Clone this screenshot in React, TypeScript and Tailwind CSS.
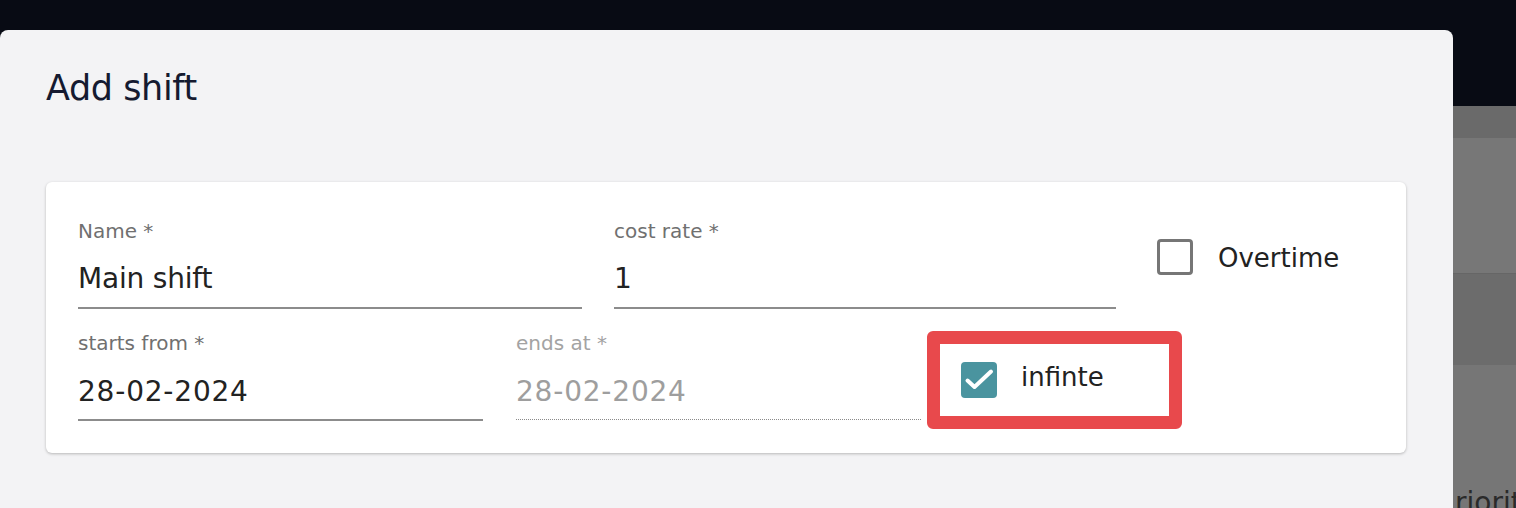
const font = { fontFamily: '"DejaVu Sans", "Noto Sans", sans-serif' }

function Field({
  label,
  value,
  width,
  disabled = false,
  date = false,
}: {
  label: string
  value: string
  width: string
  disabled?: boolean
  date?: boolean
}) {
  return (
    <div className={`${width} flex flex-col`}>
      <span className={`text-[20px] leading-[24px] ${disabled ? 'text-[#a3a3a3]' : 'text-[#707070]'}`}>{label}</span>
      <div
        className={`${date ? 'mt-[20px] pb-[10px]' : 'mt-[19px] pb-[11px]'} ${
          disabled ? 'border-b border-dotted border-[#8a8a8a] text-[#9e9e9e]' : 'border-b-2 border-[#8c8c8c] text-[#222]'
        }`}
      >
        <span className={`block text-[28px] leading-[34px] ${date ? 'tracking-[0.8px]' : 'tracking-[-0.2px]'}`}>
          {value}
        </span>
      </div>
    </div>
  )
}

function Checkbox({ checked }: { checked: boolean }) {
  if (!checked) {
    return <span className="h-[36px] w-[36px] shrink-0 rounded-[4px] border-[3px] border-[#767676]" />
  }
  return (
    <span className="h-[36px] w-[36px] shrink-0 rounded-[4px] bg-[#4a949f]">
      <svg viewBox="0 0 36 36" className="h-[36px] w-[36px]">
        <polyline
          points="6.5,18.5 13.5,25 30,9.5"
          fill="none"
          stroke="white"
          strokeWidth="4"
          strokeLinecap="round"
          strokeLinejoin="round"
        />
      </svg>
    </span>
  )
}

export default function App() {
  return (
    <div className="flex h-[508px] w-full overflow-hidden bg-[#080b14]" style={font}>
      <div className="mt-[30px] w-[1453px] shrink-0 rounded-t-lg bg-[#f3f3f5] pl-[46px] pt-[38px]">
        <h2 className="text-[35px] leading-[40px] tracking-[-0.4px] text-[#151a30]">Add shift</h2>

        <div className="mt-[74px] w-[1360px] rounded-md bg-white pl-[32px] pt-[37px] pb-[24px] shadow-[0_1px_3px_rgba(0,0,0,0.25)]">
          <div className="flex items-start">
            <Field label="Name *" value="Main shift" width="w-[504px]" />
            <div className="ml-[32px]">
              <Field label="cost rate *" value="1" width="w-[502px]" />
            </div>
            <label className="ml-[41px] mt-[19px] flex items-center">
              <Checkbox checked={false} />
              <span className="ml-[25px] mt-[3px] text-[26px] leading-[34px] text-[#222]">Overtime</span>
            </label>
          </div>

          <div className="mt-[22px] flex items-start">
            <Field label="starts from *" value="28-02-2024" width="w-[405px]" date />
            <div className="ml-[33px]">
              <Field label="ends at *" value="28-02-2024" width="w-[405px]" disabled date />
            </div>
            <div className="ml-[6px] flex h-[98px] w-[255px] items-center rounded-[6px] border-[13px] border-[#e8494c] pl-[21px]">
              <Checkbox checked />
              <span className="mb-[6px] ml-[24px] text-[26px] leading-[34px] text-[#222]">infinte</span>
            </div>
          </div>
        </div>
      </div>

      <div className="flex flex-1 flex-col">
        <div className="h-[106px] bg-[#080b14]" />
        <div className="h-[32px] bg-[#6a6a6a]" />
        <div className="h-[136px] border-b border-[#666] bg-[#777777]" />
        <div className="h-[91px] bg-[#6c6c6c]" />
        <div className="flex flex-1 flex-col justify-end bg-[#767676]">
          <span className="-mb-[12px] pl-[2px] text-[28px] leading-[34px] text-[#2a2a2a]">riority</span>
        </div>
      </div>
    </div>
  )
}
